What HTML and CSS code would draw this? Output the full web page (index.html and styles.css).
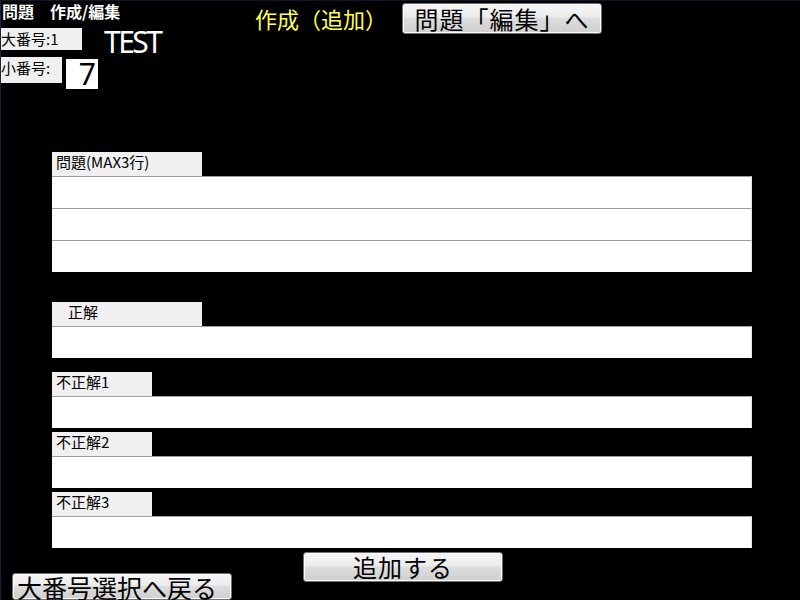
FILE: index.html
```html
<!DOCTYPE html>
<html lang="ja">
<head>
<meta charset="utf-8">
<link rel="stylesheet" href="styles.css">
</head>
<body>
<div class="screen">
  <header class="header">
    <div class="info">
      <div class="title">問題　作成/編集</div>
      <div class="info-row row1">
        <div class="tag tag-big">大番号:1</div>
        <div class="big-name">TEST</div>
      </div>
      <div class="info-row row2">
        <div class="tag tag-small">小番号:</div>
        <div class="num-box">7</div>
      </div>
    </div>
    <div class="mode">
      <div class="mode-text">作成（追加）</div>
      <button class="btn btn-edit">問題「編集」へ</button>
    </div>
  </header>

  <main class="form">
    <section class="field">
      <div class="label label-wide">問題(MAX3行)</div>
      <div class="input"></div>
      <div class="input"></div>
      <div class="input"></div>
    </section>
    <section class="field field-answer">
      <div class="label label-wide label-indent">正解</div>
      <div class="input"></div>
    </section>
    <section class="field field-w1">
      <div class="label">不正解1</div>
      <div class="input"></div>
    </section>
    <section class="field field-w2">
      <div class="label">不正解2</div>
      <div class="input"></div>
    </section>
    <section class="field field-w2">
      <div class="label">不正解3</div>
      <div class="input"></div>
    </section>
  </main>

  <footer class="footer">
    <button class="btn btn-back">大番号選択へ戻る</button>
    <button class="btn btn-add">追加する</button>
  </footer>
</div>
</body>
</html>
```

FILE: styles.css
```css
html, body {
  margin: 0;
  padding: 0;
  background: #000;
}
body {
  font-family: "Noto Sans CJK JP", "Noto Sans", sans-serif;
  color: #000;
}
.screen {
  width: 800px;
  height: 600px;
  overflow: hidden;
  background: #000;
  box-sizing: border-box;
  border-left: 1px solid #16233d;
  border-top: 1px solid #0d1626;
}

/* header */
.header {
  display: flex;
  height: 151px;
}
.info {
  width: 254px;
  display: flex;
  flex-direction: column;
}
.title {
  height: 27px;
  color: #fff;
  font-weight: bold;
  font-size: 16px;
  line-height: 21px;
  padding-left: 1px;
  white-space: nowrap;
}
.info-row {
  display: flex;
  align-items: flex-start;
}
.tag {
  background: #f0f0f0;
  font-size: 15px;
  line-height: 22px;
  white-space: nowrap;
}
.tag-big {
  width: 81px;
  height: 22px;
}
.tag-small {
  width: 61px;
  height: 26px;
  line-height: 22px;
}
.big-name {
  margin-left: 22px;
  color: #fff;
  font-family: "Noto Sans", sans-serif;
  font-size: 30px;
  line-height: 30px;
  letter-spacing: -2.5px;
  margin-top: -1px;
}
.num-box {
  margin-left: 4px;
  margin-top: 2px;
  width: 32px;
  height: 30px;
  background: #fff;
  font-family: "Noto Sans", sans-serif;
  font-size: 30px;
  line-height: 30px;
  text-align: right;
  padding-right: 2px;
  box-sizing: border-box;
}
.mode {
  display: flex;
  align-items: flex-start;
  padding-top: 2px;
}
.mode-text {
  color: #ffff4d;
  font-size: 22px;
  line-height: 30px;
  white-space: nowrap;
}
.btn {
  font-family: "Noto Sans CJK JP", sans-serif;
  color: #000;
  background: linear-gradient(#f6f6f6 0%, #ebebeb 45%, #dddddd 50%, #cfcfcf 100%);
  border: 1px solid #707070;
  border-radius: 3px;
  box-shadow: inset 0 0 0 1px #fcfcfc;
  padding: 0;
  margin: 0;
  white-space: nowrap;
}
.btn-edit {
  margin-left: 15px;
  width: 200px;
  height: 31px;
  font-size: 24px;
  line-height: 29px;
  letter-spacing: 1px;
}

/* form */
.form {
  padding-left: 51px;
  width: 700px;
}
.field {
  display: flex;
  flex-direction: column;
}
.field-answer { margin-top: 30px; }
.field-w1 { margin-top: 14px; }
.field-w2 { margin-top: 4px; }
.label {
  width: 100px;
  height: 24px;
  background: #f0f0f0;
  font-size: 15px;
  line-height: 20px;
  padding-left: 4px;
  box-sizing: border-box;
  white-space: nowrap;
}
.label-wide { width: 150px; }
.label-indent { padding-left: 16px; }
.input {
  height: 32px;
  background: #fff;
  border-top: 1px solid #a0a0a0;
  border-right: 1px solid #e4e4e4;
  box-sizing: border-box;
}

/* footer */
.footer {
  display: flex;
  align-items: flex-start;
  margin-top: 4px;
}
.btn-add {
  margin-left: 71px;
  width: 200px;
  height: 30px;
  font-size: 24px;
  line-height: 28px;
  letter-spacing: 1px;
}
.btn-back {
  margin-left: 11px;
  margin-top: 21px;
  width: 220px;
  height: 27px;
  font-size: 25px;
  line-height: 24px;
  text-align: left;
  padding-left: 4px;
}
```
